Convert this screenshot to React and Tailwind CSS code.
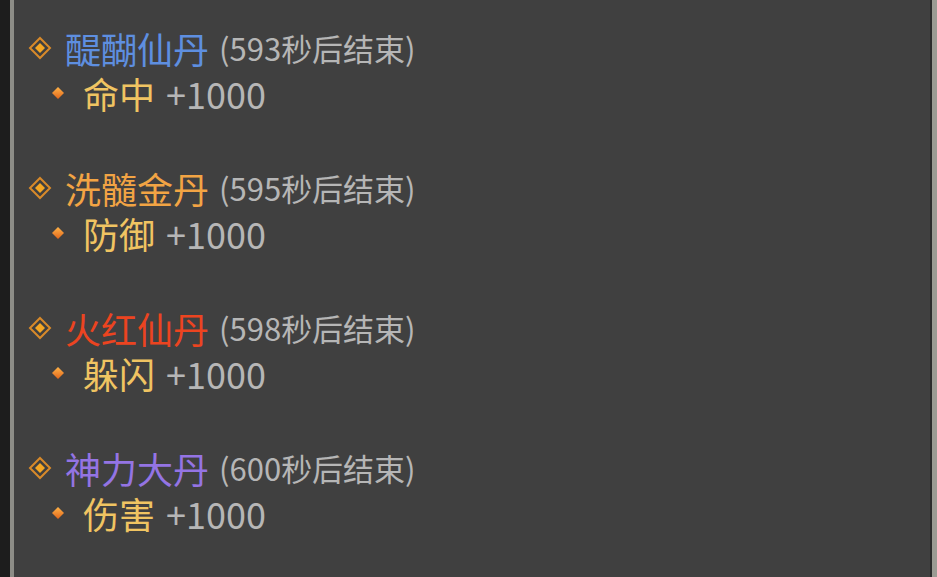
import React from "react";

const buffs = [
  { name: "醍醐仙丹", color: "text-[#5e8fe0]", secs: 593, attr: "命中" },
  { name: "洗髓金丹", color: "text-[#f2a444]", secs: 595, attr: "防御" },
  { name: "火红仙丹", color: "text-[#ec4420]", secs: 598, attr: "躲闪" },
  { name: "神力大丹", color: "text-[#9474e4]", secs: 600, attr: "伤害" },
];

const font = { fontFamily: '"Noto Sans CJK SC", "Noto Sans", sans-serif' };

function TitleMark() {
  return (
    <svg width="24" height="24" viewBox="0 0 24 24" className="shrink-0">
      <path d="M12 2 L22 12 L12 22 L2 12 Z" fill="none" stroke="#d88a2a" strokeWidth="2" />
      <path d="M12 7 L17 12 L12 17 L7 12 Z" fill="#f5a623" />
    </svg>
  );
}

function Dot() {
  return (
    <svg width="14" height="14" viewBox="0 0 14 14" className="shrink-0">
      <defs>
        <linearGradient id="dot" x1="0" y1="0" x2="0" y2="1">
          <stop offset="0" stopColor="#ffb347" />
          <stop offset="1" stopColor="#e0661c" />
        </linearGradient>
      </defs>
      <path d="M7 1 L13 7 L7 13 L1 7 Z" fill="url(#dot)" />
    </svg>
  );
}

function BuffItem({ buff }) {
  return (
    <div className="flex flex-col mb-[49px]">
      <div className="flex items-center h-[47px] pl-[14px]">
        <TitleMark />
        <span className={`ml-[13px] text-[36px] leading-[44px] ${buff.color}`}>{buff.name}</span>
        <span className="ml-[10px] text-[31px] leading-[44px] text-[#b6b6b6]">({buff.secs}秒后结束)</span>
      </div>
      <div className="flex items-center h-[44px] pl-[37px]">
        <Dot />
        <span className="ml-[18px] text-[36px] leading-[44px] text-[#f0c462]">{buff.attr}</span>
        <span className="ml-[11px] text-[36px] leading-[44px] text-[#b6b6b6]">+1000</span>
      </div>
    </div>
  );
}

export default function App() {
  return (
    <div className="flex w-[937px] h-[577px] bg-[#404040] overflow-hidden" style={font}>
      <div className="w-[10px] bg-[#1d1d1d]" />
      <div className="w-[4px] bg-[#8d8d87]" />
      <div className="flex-1 flex flex-col pt-[24px]">
        {buffs.map((b) => (
          <BuffItem key={b.name} buff={b} />
        ))}
      </div>
      <div className="w-[2px] bg-[#2c2c2c]" />
      <div className="w-[5px] bg-[#9b9b93]" />
    </div>
  );
}
